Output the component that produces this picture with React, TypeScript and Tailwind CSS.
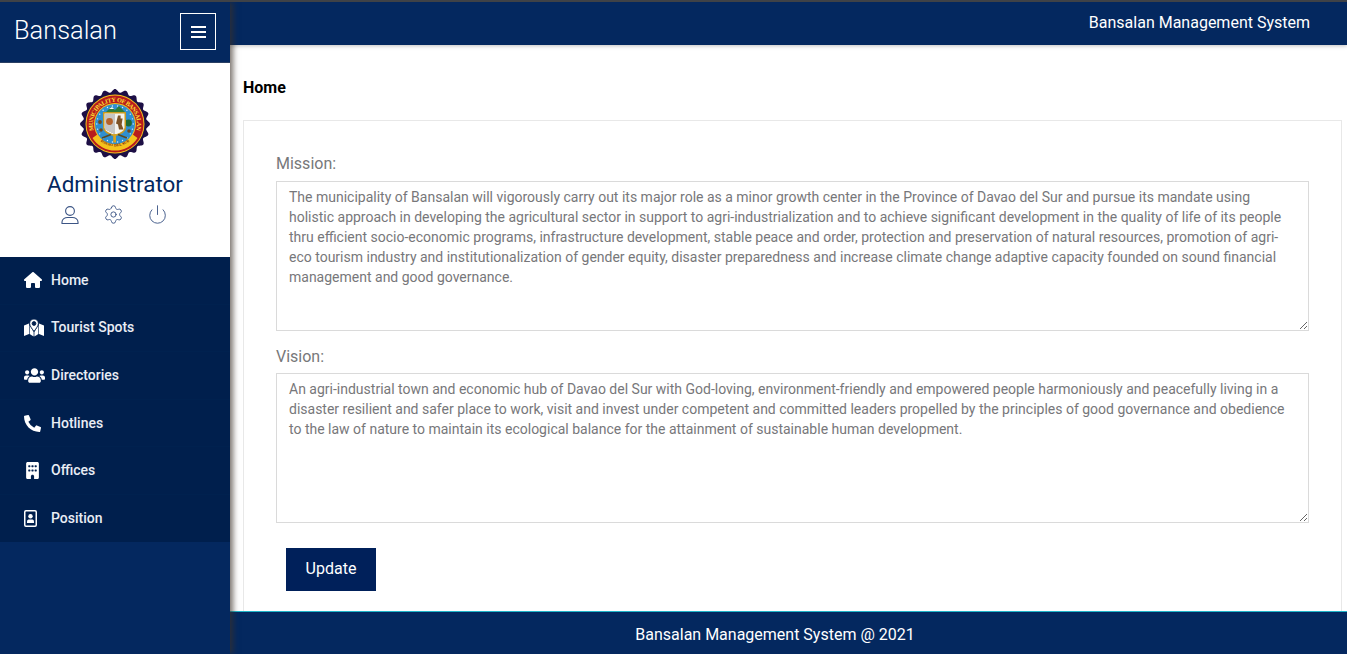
import { FaPhoneAlt, FaUsers } from "react-icons/fa";
import { FaHouse, FaBuilding } from "react-icons/fa6";
import { Settings, Power } from "lucide-react";

function MapIcon() {
  return (
    <svg width="20" height="18" viewBox="0 0 20 18" fill="#fff">
      <path d="M0 6.5 L5 4.5 V15 L0 17 Z" />
      <path d="M5.6 6 L9.6 13 V17.5 L5.6 15 Z" />
      <path d="M14.4 6 L10.4 13 V17.5 L14.4 15 Z" />
      <path d="M15 4.5 L20 6.5 V17 L15 15 Z" />
      <path
        fillRule="evenodd"
        stroke="#001f4d"
        strokeWidth="0.9"
        d="M10 0 C7.4 0 5.6 2 5.6 4.4 C5.6 7 8.6 10.4 10 12.4 C11.4 10.4 14.4 7 14.4 4.4 C14.4 2 12.6 0 10 0 Z M10 2.6 A1.9 1.9 0 1 1 10 6.4 A1.9 1.9 0 1 1 10 2.6 Z"
      />
    </svg>
  );
}

function PositionIcon() {
  return (
    <svg width="13" height="17" viewBox="0 0 13 17" fill="#fff">
      <rect x="0.75" y="0.75" width="11.5" height="15.5" rx="1.2" fill="none" stroke="#fff" strokeWidth="1.5" />
      <circle cx="6.5" cy="6.3" r="2.2" />
      <path d="M3 13 V11.6 C3 10.2 4.2 9.6 5 9.6 H8 C8.8 9.6 10 10.2 10 11.6 V13 Z" />
    </svg>
  );
}

const nav = [
  { label: "Home", icon: <FaHouse size={18} /> },
  { label: "Tourist Spots", icon: <MapIcon /> },
  { label: "Directories", icon: <FaUsers size={21} /> },
  { label: "Hotlines", icon: <FaPhoneAlt size={17} /> },
  { label: "Offices", icon: <FaBuilding size={17} /> },
  { label: "Position", icon: <PositionIcon /> },
];

const mission =
  "The municipality of Bansalan will vigorously carry out its major role as a minor growth center in the Province of Davao del Sur and pursue its mandate using holistic approach in developing the agricultural sector in support to agri-industrialization and to achieve significant development in the quality of life of its people thru efficient socio-economic programs, infrastructure development, stable peace and order, protection and preservation of natural resources, promotion of agri-eco tourism industry and institutionalization of gender equity, disaster preparedness and increase climate change adaptive capacity founded on sound financial management and good governance.";
const vision =
  "An agri-industrial town and economic hub of Davao del Sur with God-loving, environment-friendly and empowered people harmoniously and peacefully living in a disaster resilient and safer place to work, visit and invest under competent and committed leaders propelled by the principles of good governance and obedience to the law of nature to maintain its ecological balance for the attainment of sustainable human development.";

function Seal() {
  const n = 20;
  let d = "";
  for (let i = 0; i < 360; i++) {
    const a = (i * Math.PI) / 180;
    const r = 33.3 + 1.7 * Math.cos(n * a);
    d += `${i === 0 ? "M" : "L"}${(35 + r * Math.cos(a)).toFixed(2)} ${(35 + r * Math.sin(a)).toFixed(2)}`;
  }
  d += "Z";
  const dots = Array.from({ length: 22 }, (_, i) => {
    const a = (i / 22) * Math.PI * 2;
    return [35 + 18.2 * Math.cos(a), 35 + 18.2 * Math.sin(a)];
  });
  return (
    <svg width="70" height="70" viewBox="0 0 70 70">
      <path d={d} fill="#1d0f45" />
      <circle cx="35" cy="35" r="29.5" fill="#f5c21c" />
      <circle cx="35" cy="35" r="28.5" fill="#b81c1c" />
      <path d="M12.5 49 A26.5 26.5 0 0 0 57.5 49 L52 45 A20 20 0 0 1 18 45 Z" fill="#f5c21c" />
      <circle cx="35" cy="35" r="21" fill="#f5c21c" />
      <circle cx="35" cy="35" r="20" fill="#2f8fd0" />
      <defs>
        <path id="sealTop" d="M14 48.5 A25 25 0 1 1 56 48.5" />
        <path id="sealBottom" d="M16 45.5 A22 22 0 0 0 54 45.5" />
      </defs>
      <text fontSize="6.2" fontWeight="700" fill="#ffe034" fontFamily="'Liberation Serif', serif" dominantBaseline="central">
        <textPath href="#sealTop" startOffset="50%" textAnchor="middle">MUNICIPALITY OF BANSALAN</textPath>
      </text>
      <text fontSize="3.8" fontWeight="700" fill="#7a1a10" fontFamily="'Liberation Serif', serif" dominantBaseline="central">
        <textPath href="#sealBottom" startOffset="50%" textAnchor="middle">DAVAO DEL SUR</textPath>
      </text>
      {dots.map(([x, y], i) => (
        <circle key={i} cx={x} cy={y} r="0.7" fill="#dbeafe" />
      ))}
      <path d="M25 24 L31 18 L35 21 L39 17 L46 24 Z" fill="#2d7d3a" />
      <path d="M29 20 l3 -2 l2 2 Z" fill="#f3f3f3" />
      <circle cx="48.5" cy="34" r="3.4" fill="#1f6b34" />
      <circle cx="20" cy="33" r="1.9" fill="#6d4a1f" />
      <circle cx="21" cy="41" r="1.8" fill="#6d4a1f" />
      <circle cx="49" cy="42" r="1.8" fill="#6d4a1f" />
      <path d="M23 23 H46 V39 Q46 44 34.5 47.5 Q23 44 23 39 Z" fill="#c99a20" />
      <path d="M24.5 24.5 H44.5 V38.5 Q44.5 43 34.5 45.8 Q24.5 43 24.5 38.5 Z" fill="#f4f3ee" />
      <path d="M26 25 V41 M28 25 V42 M30 25 V43 M32 25 V44 M34 25 V45" stroke="#8f8f8f" strokeWidth="0.9" />
      <circle cx="29.5" cy="32.5" r="3.4" fill="#b5622a" />
      <path d="M38 26.5 h2.6 v3 h2 l-1 6 l2 5 h-4.6 l-1 -5 l-2 -1 Z" fill="#7d5226" />
      <rect x="33.2" y="45" width="2.8" height="8.5" fill="#d3a423" />
      <path d="M22 49 L31 45.5 M47 49 L38 45.5" stroke="#5a4a20" strokeWidth="1.5" />
    </svg>
  );
}

function Field({ label, text, gap }: { label: string; text: string; gap: string }) {
  return (
    <div className="flex flex-col">
      <label className={`text-[16px] leading-[24px] text-[#77787a] ${gap}`}>{label}</label>
      <textarea
        readOnly
        defaultValue={text}
        className="w-full h-[150px] border border-[#dadada] bg-white pl-[12px] pr-[11px] pt-[5px] text-[14px] leading-[20px] text-[#77777a] outline-none resize-y block"
      />
    </div>
  );
}

export default function App() {
  return (
    <div
      className="h-[654px] w-[1347px] overflow-hidden flex flex-col bg-white border-t-2 border-[#3f4247]"
      style={{ fontFamily: "Roboto, 'Liberation Sans', sans-serif" }}
    >
      <div className="flex flex-1 min-h-0">
        <aside className="w-[230px] shrink-0 flex flex-col bg-[#04285f] shadow-[3px_0_6px_rgba(60,50,40,0.7)] z-10">
          <div className="h-[61px] shrink-0 flex items-center justify-between pl-[14px] pr-[14px] border-b border-[#2a3f63]">
            <span className="text-[25.4px] font-light text-white leading-none mb-[2px]">Bansalan</span>
            <button className="w-[36px] h-[37px] border border-white flex flex-col items-center justify-center gap-[3px] mb-[1px]">
              <span className="block w-[15px] h-[2px] bg-white" />
              <span className="block w-[15px] h-[2px] bg-white" />
              <span className="block w-[15px] h-[2px] bg-white" />
            </button>
          </div>
          <div className="h-[194px] shrink-0 bg-white flex flex-col items-center pt-[26px]">
            <Seal />
            <div className="mt-[10px] text-[22.4px] leading-[30px] text-[#04285f]">Administrator</div>
            <div className="flex items-center gap-[23px] mt-[5px] mr-[2px] text-[#3c5585]">
              <svg width="20" height="20" viewBox="0 0 20 20" fill="none" stroke="currentColor" strokeWidth="1.1">
                <circle cx="10" cy="6" r="4.4" />
                <path d="M2 18.5 V17 C2 14 5 12.5 7.5 12.5 H12.5 C15 12.5 18 14 18 17 V18.5 Z" />
              </svg>
              <Settings size={21} strokeWidth={1.05} />
              <Power size={21} strokeWidth={1.05} />
            </div>
          </div>
          <nav className="h-[285px] overflow-hidden shrink-0 bg-[#001f4d] flex flex-col">
            {nav.map(({ label, icon }) => (
              <a key={label} className="h-[47.6px] shrink-0 flex items-center border-b border-[#00214f] text-white">
                <span className="w-[51px] pl-[24px] shrink-0 flex items-center">{icon}</span>
                <span className="text-[14px] font-medium text-[#e9edf5]">{label}</span>
              </a>
            ))}
          </nav>
        </aside>
        <main className="flex-1 min-w-0 flex flex-col">
          <header className="h-[43px] shrink-0 bg-[#04285f] flex items-center justify-end pr-[37px] pb-[2px] shadow-[0_1px_4px_rgba(0,0,0,0.25)]">
            <span className="text-[16px] text-white">Bansalan Management System</span>
          </header>
          <div className="flex-1 min-h-0 pl-[13px] pr-[5px] overflow-hidden">
            <h1 className="mt-[33px] h-[20px] text-[16px] leading-[20px] font-bold text-black">Home</h1>
            <section className="mt-[22px] border border-[#e8e8e8] h-[600px] pl-[32px] pr-[32px] pt-[31px]">
              <div className="flex flex-col gap-[14px]">
                <Field label="Mission:" text={mission} gap="mb-[5px]" />
                <Field label="Vision:" text={vision} gap="mb-[4px]" />
              </div>
              <button className="ml-[10px] mt-[25px] w-[90px] h-[43px] pb-[2px] bg-[#00205a] text-white text-[16px]">Update</button>
            </section>
          </div>
          <footer className="h-[43px] shrink-0 bg-[#04285f] border-t border-[#1fb5c9] flex items-center justify-center pr-[27px] pt-[3px]">
            <span className="text-[16px] text-white">Bansalan Management System @ 2021</span>
          </footer>
        </main>
      </div>
    </div>
  );
}
